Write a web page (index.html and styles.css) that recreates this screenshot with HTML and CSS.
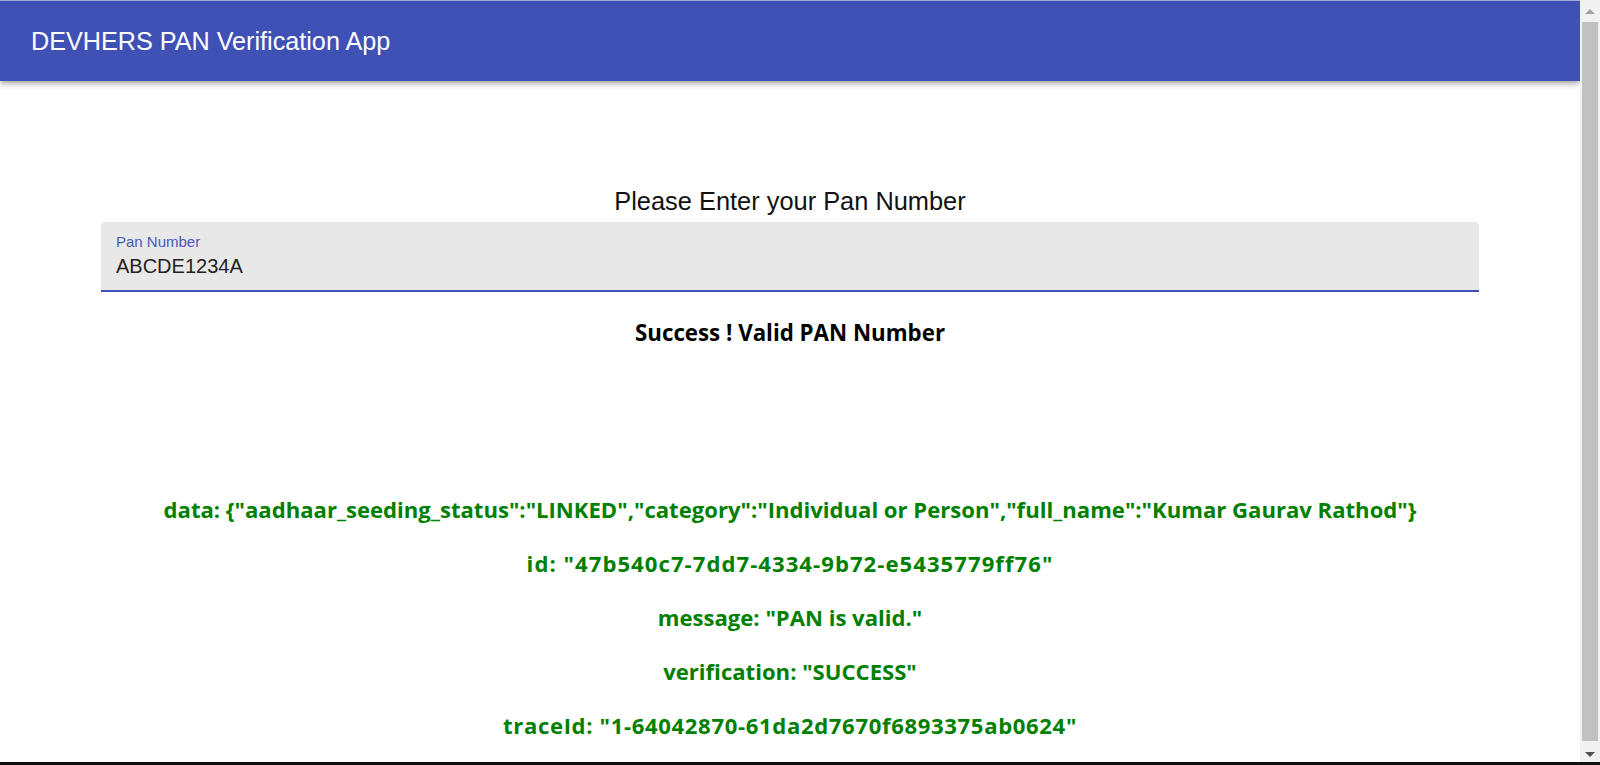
FILE: index.html
```html
<!DOCTYPE html>
<html lang="en">
<head>
<meta charset="utf-8">
<title>DEVHERS PAN Verification App</title>
<link rel="stylesheet" href="styles.css">
</head>
<body>
<header class="app-bar">
  <h1 class="app-title">DEVHERS PAN Verification App</h1>
</header>
<main class="content">
  <h2 class="prompt">Please Enter your Pan Number</h2>
  <div class="field">
    <label class="field-label" for="pan">Pan Number</label>
    <input class="field-input" id="pan" type="text" value="ABCDE1234A">
  </div>
  <h3 class="status">Success ! Valid PAN Number</h3>
  <section class="result">
    <p class="result-line">data: {"aadhaar_seeding_status":"LINKED","category":"Individual or Person","full_name":"Kumar Gaurav Rathod"}</p>
    <p class="result-line result-line--numeric">id: "47b540c7-7dd7-4334-9b72-e5435779ff76"</p>
    <p class="result-line">message: "PAN is valid."</p>
    <p class="result-line">verification: "SUCCESS"</p>
    <p class="result-line result-line--trace">traceId: "1-64042870-61da2d7670f6893375ab0624"</p>
  </section>
</main>
<div class="scrollbar" aria-hidden="true">
  <span class="scroll-btn"><span class="arrow-up"></span></span>
  <span class="scroll-track"><span class="scroll-thumb"></span></span>
  <span class="scroll-btn"><span class="arrow-down"></span></span>
</div>
<div class="taskbar"><span class="taskbar-start"></span></div>
</body>
</html>
```
FILE: styles.css
```css
html, body {
  overflow: hidden;
}

body {
  margin: 0 20px 0 0;
  background: #ffffff;
  font-family: "Liberation Sans", Arial, sans-serif;
}

.app-bar {
  height: 80px;
  border-top: 1px solid #9fa8da;
  background: #3f51b5;
  box-shadow: 0 2px 4px -1px rgba(0,0,0,0.2), 0 4px 5px 0 rgba(0,0,0,0.14), 0 1px 10px 0 rgba(0,0,0,0.12);
  display: flex;
  align-items: center;
  padding-left: 31px;
}

.app-title {
  margin: 0;
  color: #ffffff;
  font-size: 25.2px;
  font-weight: 400;
}

.content {
  display: flex;
  flex-direction: column;
  align-items: center;
  padding-top: 105px;
}

.prompt {
  margin: 0 0 6px;
  font-size: 25.4px;
  font-weight: 400;
  color: #111;
  line-height: 30px;
}

.field {
  width: 1378px;
  box-sizing: border-box;
  height: 70px;
  background: #e8e8e8;
  border-radius: 4px 4px 0 0;
  border-bottom: 2px solid #3f51b5;
  padding: 11px 15px 0;
  display: flex;
  flex-direction: column;
}

.field-label {
  font-size: 15px;
  color: #4a5ab8;
  line-height: 17px;
}

.field-input {
  border: 0;
  padding: 0;
  margin-top: 5px;
  background: transparent;
  font-family: "Liberation Sans", Arial, sans-serif;
  font-size: 20px;
  color: #222;
  outline: none;
}

.status {
  margin: 26px 0 0;
  font-family: "Open Sans", "Noto Sans", sans-serif;
  font-weight: 700;
  font-size: 22.3px;
  line-height: 30px;
  color: #000;
}

.result {
  display: flex;
  flex-direction: column;
  align-items: center;
  gap: 24px;
  margin-top: 146px;
}

.result-line {
  margin: 0;
  font-family: "Open Sans", "Noto Sans", sans-serif;
  font-weight: 700;
  font-size: 22.1px;
  line-height: 30px;
  color: #008000;
}

.result-line--numeric {
  letter-spacing: 1.05px;
}

.result-line--trace {
  letter-spacing: 0.65px;
}

.scrollbar {
  position: fixed;
  top: 0;
  right: 0;
  bottom: 0;
  width: 20px;
  background: #f1f1f1;
  display: flex;
  flex-direction: column;
}

.scroll-btn {
  height: 22px;
  display: flex;
  align-items: center;
  justify-content: center;
  flex: none;
}

.arrow-up {
  width: 0;
  height: 0;
  border-left: 5px solid transparent;
  border-right: 5px solid transparent;
  border-bottom: 5px solid #a3a3a3;
}

.arrow-down {
  width: 0;
  height: 0;
  border-left: 5px solid transparent;
  border-right: 5px solid transparent;
  border-top: 5px solid #505050;
}

.scroll-track {
  flex: 1;
  display: flex;
  padding: 0 2px 2px;
}

.scroll-thumb {
  flex: 1;
  background: #c1c1c1;
}

.taskbar {
  position: fixed;
  left: 0;
  right: 0;
  bottom: 0;
  height: 3px;
  background: #111;
  display: flex;
}

.taskbar-start {
  width: 60px;
  background: #111;
}
```
